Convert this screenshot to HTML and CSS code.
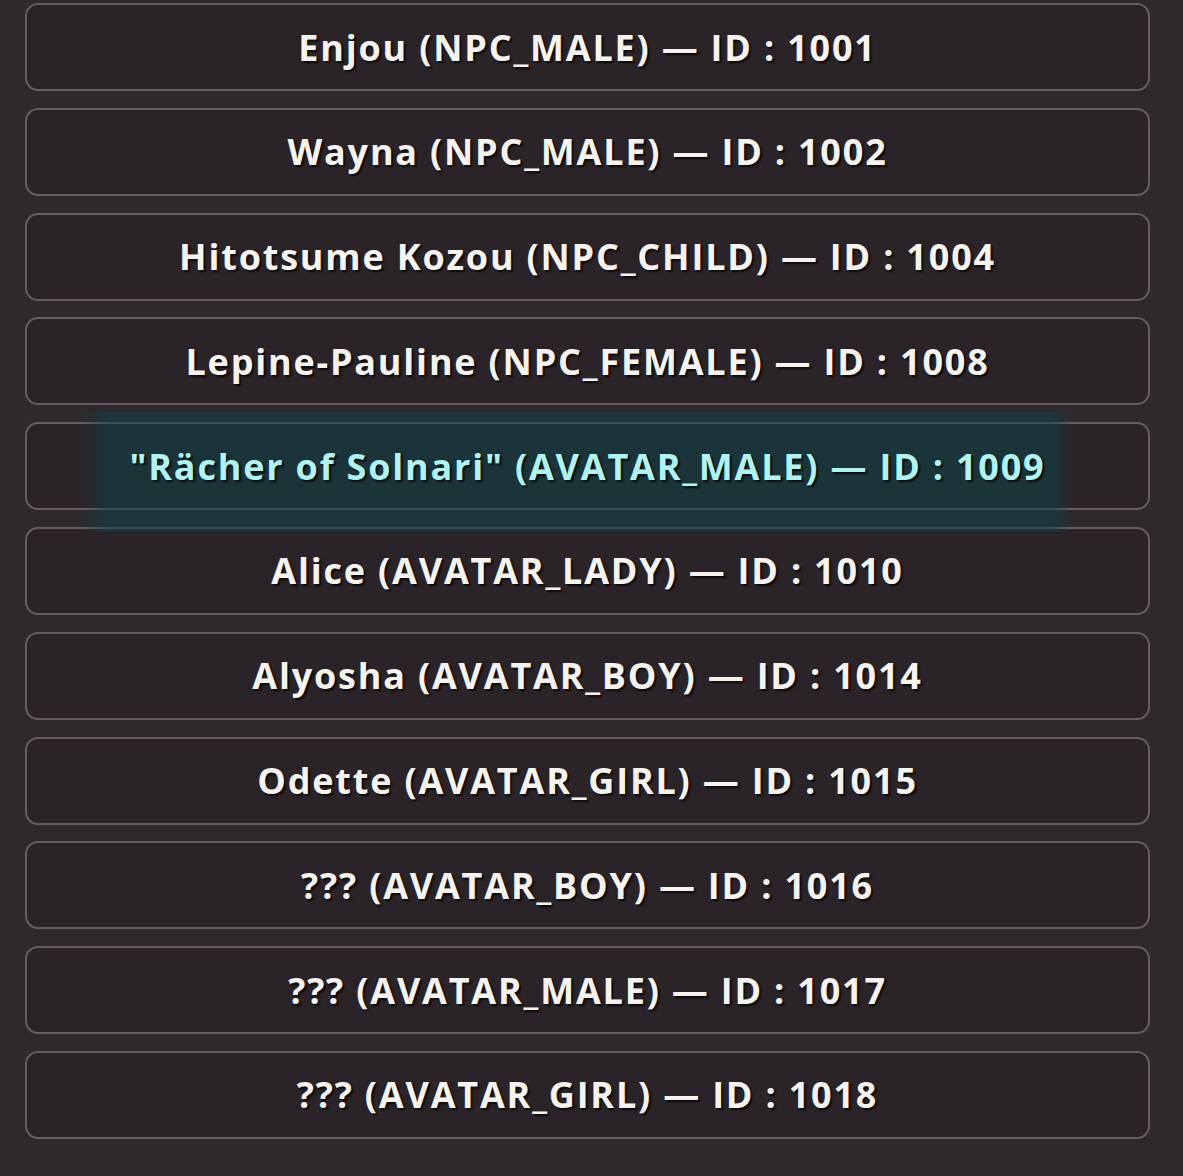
FILE: index.html
```html
<!DOCTYPE html>
<html lang="en">
<head>
    <meta charset="UTF-8">
    <meta name="viewport" content="width=device-width, initial-scale=1.0">
    <title>Character List</title>
    <link rel="stylesheet" href="styles.css">
</head>
<body>

<ul class="char-list">
    <li class="char-row">Enjou (NPC_MALE) — ID : 1001</li>
    <li class="char-row">Wayna (NPC_MALE) — ID : 1002</li>
    <li class="char-row">Hitotsume Kozou (NPC_CHILD) — ID : 1004</li>
    <li class="char-row">Lepine-Pauline (NPC_FEMALE) — ID : 1008</li>
    <li class="char-row selected"><span>"Rächer of Solnari" (AVATAR_MALE) — ID : 1009</span></li>
    <li class="char-row">Alice (AVATAR_LADY) — ID : 1010</li>
    <li class="char-row">Alyosha (AVATAR_BOY) — ID : 1014</li>
    <li class="char-row">Odette (AVATAR_GIRL) — ID : 1015</li>
    <li class="char-row">??? (AVATAR_BOY) — ID : 1016</li>
    <li class="char-row">??? (AVATAR_MALE) — ID : 1017</li>
    <li class="char-row">??? (AVATAR_GIRL) — ID : 1018</li>
</ul>

</body>
</html>
```

FILE: styles.css
```css
body {
    margin: 0;
    background-color: #2d292c;
    font-family: "Open Sans", "Noto Sans", sans-serif;
}

.char-list {
    list-style: none;
    margin: 0;
    padding: 3px 33px 0 25px;
    display: flex;
    flex-direction: column;
    gap: 16.8px;
}

.char-row {
    position: relative;
    height: 88px;
    box-sizing: border-box;
    display: flex;
    align-items: center;
    justify-content: center;
    border: 2px solid #675c62;
    border-radius: 13px;
    background-color: #2a2428;
    color: #f6f3ef;
    font-size: 36px;
    font-weight: 700;
    letter-spacing: 1.8px;
    text-shadow: 2px 2px 2px rgba(0, 0, 0, 0.75);
}

/* highlighted entry: teal glow laid over the row and its neighbours */
.char-row.selected {
    color: #b2f2f0;
}

.char-row.selected span {
    position: relative;
    z-index: 2;
}

.char-row.selected::after {
    content: "";
    position: absolute;
    top: -12px;
    bottom: -24px;
    left: 52px;
    right: 76px;
    z-index: 1;
    pointer-events: none;
    background: linear-gradient(to right,
        rgba(12, 68, 76, 0) 0%,
        rgba(12, 68, 76, 0.5) 3%,
        rgba(12, 68, 76, 0.5) 98%,
        rgba(12, 68, 76, 0) 100%);
}
```
